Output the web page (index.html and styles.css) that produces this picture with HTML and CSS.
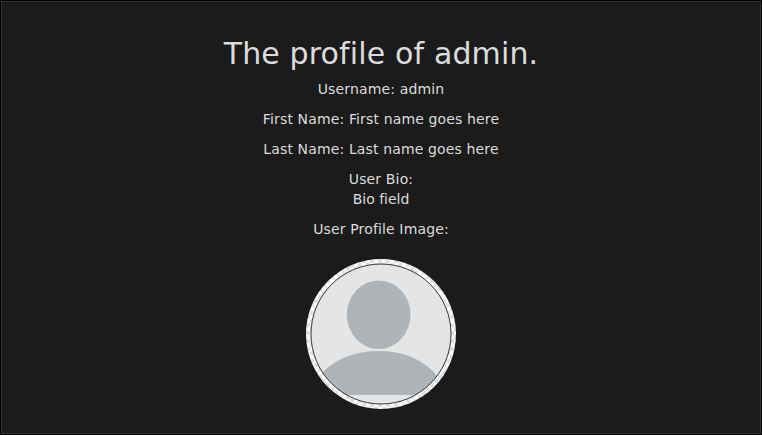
FILE: index.html
```html
<!DOCTYPE html>
<html lang="en">
<head>
<meta charset="utf-8">
<title>The profile of admin.</title>
<link rel="stylesheet" href="styles.css">
</head>
<body>
<main class="profile">
  <h1 class="title">The profile of admin.</h1>
  <p>Username: admin</p>
  <p>First Name: First name goes here</p>
  <p>Last Name: Last name goes here</p>
  <p>User Bio:<br><span class="bio">Bio field</span></p>
  <p>User Profile Image:</p>
  <svg class="avatar" viewBox="0 0 150 150" role="img" aria-label="Profile image">
    <defs>
      <pattern id="checks" width="8" height="8" patternUnits="userSpaceOnUse">
        <path fill="#fff" d="M0 0h8v8H0z"/>
        <path fill="#e0e0e0" d="M0 0h4v4H0zM4 4h4v4H4z"/>
      </pattern>
      <clipPath id="disc"><circle cx="75" cy="75" r="70"/></clipPath>
    </defs>
    <circle cx="75" cy="75" r="75" fill="url(#checks)"/>
    <circle cx="75" cy="75" r="70" fill="#e4e5e7"/>
    <g clip-path="url(#disc)" fill="#aeb4b7">
      <ellipse cx="72.7" cy="55.7" rx="31.8" ry="34.3"/>
      <path d="M5 136C10 109 39 92 73 92s60 17 67 44z"/>
    </g>
    <circle cx="75" cy="75" r="70" fill="none" stroke="#222" stroke-width=".9"/>
  </svg>
</main>
</body>
</html>
```

FILE: styles.css
```css
* { box-sizing: border-box; }
body {
  margin: 0;
  background: #000;
  color: #dcdcdc;
  font: 14px/20px Verdana, "DejaVu Sans", sans-serif;
  font-variant-ligatures: none;
  letter-spacing: 0.14px;
}
.profile {
  height: 433px;
  margin: 1px;
  padding: 35px 0 0;
  border: 1px solid #333;
  background: #1b1b1b;
  text-align: center;
}
.title {
  margin: 0 0 9px;
  font-size: 30px;
  font-weight: 400;
  line-height: 33px;
}
p { margin: 0 0 10px; }
.bio { letter-spacing: 0; }
.avatar {
  display: block;
  width: 150px;
  height: 150px;
  margin: 20px auto 0;
}
```
